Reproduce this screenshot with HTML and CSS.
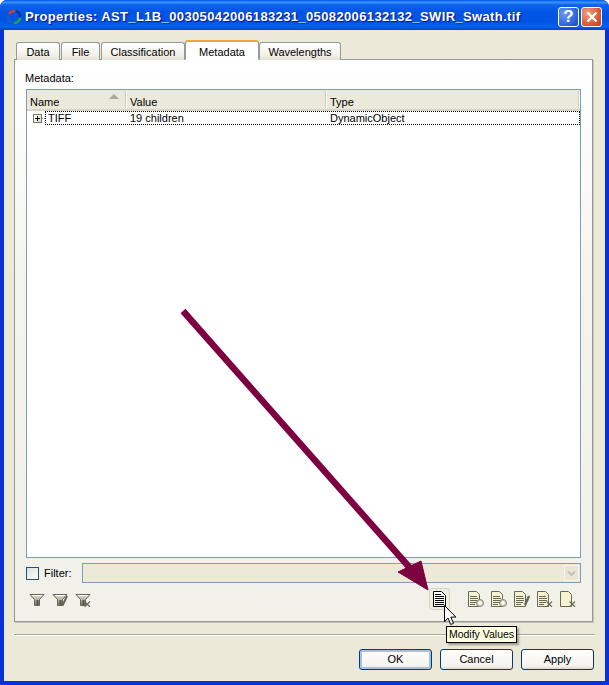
FILE: index.html
```html
<!DOCTYPE html>
<html lang="en">
<head>
<meta charset="utf-8">
<title>Properties</title>
<link rel="stylesheet" href="styles.css">
</head>
<body>
<svg class="defs" width="0" height="0" aria-hidden="true">
  <defs>
    <linearGradient id="funnelFill" x1="0" y1="0" x2="0" y2="1">
      <stop offset="0" stop-color="#e8e6d4"/><stop offset="1" stop-color="#77766a"/>
    </linearGradient>
    <symbol id="funnel" viewBox="0 0 16 16">
      <path d="M1 3.5h14L10.5 8.5v6h-5v-6z" fill="url(#funnelFill)" stroke="#66665a" stroke-width="1"/>
      <path d="M3 4.5h10" stroke="#fff" stroke-width="1"/>
      <path d="M8.5 9v5" stroke="#55554a" stroke-width="2"/>
    </symbol>
    <symbol id="doc" viewBox="0 0 16 16">
      <path d="M.5 .5h8l3 3v12h-11z" fill="#f6f3cf" stroke="#66665a"/>
      <path d="M2 5.500h7M2 7.500h8M2 9.500h8M2 11.500h7M2 13.500h5" stroke="#66665a"/>
    </symbol>
    <symbol id="plus" viewBox="0 0 16 16">
      <circle cx="12" cy="12" r="3.500" fill="#d0cfbe" stroke="#88887a"/>
      <path d="M10 12h4M12 10v4" stroke="#fff" stroke-width="1.400"/>
    </symbol>
    <symbol id="cross" viewBox="0 0 16 16">
      <path d="M9.500 10.500l5.500 5.500M15 10.500l-5.500 5.500" stroke="#66665a" stroke-width="1.100"/>
    </symbol>
  </defs>
</svg>
<div class="window">
  <header class="titlebar">
    <svg class="app-icon" viewBox="0 0 16 16" width="16" height="16">
      <path d="M3 5A6 6 0 0 1 9 2" fill="none" stroke="#d23a2a" stroke-width="2.600"/>
      <path d="M10 2A6 6 0 0 1 14 8" fill="none" stroke="#14349c" stroke-width="2.600"/>
      <path d="M14 9A6 6 0 0 1 8 14" fill="none" stroke="#20a848" stroke-width="2.600"/>
      <path d="M7 14A6 6 0 0 1 2 7" fill="none" stroke="#1c5cc8" stroke-width="2.600"/>
    </svg>
    <span class="title">Properties: AST_L1B_00305042006183231_05082006132132_SWIR_Swath.tif</span>
    <span class="cap-btn cap-help">?</span>
    <span class="cap-btn cap-close">
      <svg viewBox="0 0 12 12" width="12" height="12"><path d="M1.500 1.500l9 9M10.500 1.500l-9 9" stroke="#fff" stroke-width="2.400"/></svg>
    </span>
  </header>

  <div class="client">
    <nav class="tabs">
      <span class="tab tab-data">Data</span>
      <span class="tab tab-file">File</span>
      <span class="tab tab-class">Classification</span>
      <span class="tab tab-active">Metadata</span>
      <span class="tab tab-wave">Wavelengths</span>
    </nav>

    <section class="panel">
      <div class="label">Metadata:</div>
      <div class="tree">
        <div class="tree-head">
          <span class="col col-name">Name<i class="sort"></i></span>
          <span class="col col-value">Value</span>
          <span class="col col-type">Type</span>
        </div>
        <div class="tree-row">
          <span class="expander"></span>
          <span class="connector"></span>
          <div class="selected">
            <span>TIFF</span>
            <span>19 children</span>
            <span>DynamicObject</span>
          </div>
        </div>
      </div>

      <div class="filter-row">
        <span class="checkbox"></span>
        <span class="filter-label">Filter:</span>
        <div class="combo">
          <span class="combo-btn">
            <svg viewBox="0 0 9 7" width="9" height="7"><path d="M1 1.500l3.500 3.500L8 1.500" fill="none" stroke="#c4c2b2" stroke-width="2"/></svg>
          </span>
        </div>
      </div>

      <div class="toolbar">
        <div class="tool-group">
          <span class="tool"><svg width="16" height="16"><use href="#funnel"/></svg></span>
          <span class="tool"><svg width="16" height="16"><use href="#funnel"/><path d="M15 5l-4.500 9.500" stroke="#66665a" stroke-width="2"/></svg></span>
          <span class="tool"><svg width="16" height="16"><use href="#funnel"/><use href="#cross"/></svg></span>
        </div>
        <div class="tool-group tool-group-docs">
          <span class="tool-active">
            <svg viewBox="0 0 13 16" width="13" height="16">
              <path d="M.5.5h8l4 4v11H.5z" fill="#fff" stroke="#000"/>
              <path d="M2 3.500h6M2 5.500h9M2 7.500h9M2 9.500h9M2 11.500h9M2 13.500h9" stroke="#000"/>
            </svg>
          </span>
          <div class="docs">
            <span class="tool"><svg width="16" height="16"><use href="#doc"/><use href="#plus"/></svg></span>
            <span class="tool"><svg width="16" height="16"><use href="#doc"/><use href="#plus"/></svg></span>
            <span class="tool"><svg width="16" height="16"><use href="#doc"/><path d="M15 5l-4 9" stroke="#66665a" stroke-width="2.400"/></svg></span>
            <span class="tool"><svg width="16" height="16"><use href="#doc"/><use href="#cross"/></svg></span>
            <span class="tool"><svg width="16" height="16"><path d="M.5 .5h8l3 3v12h-11z" fill="#f6f3cf" stroke="#66665a"/><use href="#cross"/></svg></span>
          </div>
        </div>
      </div>
    </section>

    <div class="separator"></div>

    <footer class="buttons">
      <span class="btn btn-default">OK</span>
      <span class="btn">Cancel</span>
      <span class="btn">Apply</span>
    </footer>
  </div>

  <svg class="arrow" viewBox="0 0 609 685" width="609" height="685" aria-hidden="true">
    <path d="M183 311L410 568" stroke="#7d0040" stroke-width="6.500" fill="none"/>
    <path d="M398 572L421 561L428 590z" fill="#7d0040" stroke="#7d0040"/>
  </svg>

  <svg class="cursor" viewBox="0 0 13 21" width="13" height="21" aria-hidden="true">
    <path d="M.5.5v16l3.600-3.400 2.600 6.400 2.800-1.200-2.600-6.200h5z" fill="#fff" stroke="#000"/>
  </svg>

  <div class="tooltip">Modify Values</div>
</div>
</body>
</html>
```
FILE: styles.css
```css
* { box-sizing: border-box; }

html, body {
  margin: 0;
  padding: 0;
  background: #fff;
}

body {
  font: 11px/14px "Liberation Sans", Arial, sans-serif;
  color: #000;
  overflow: hidden;
}

.defs { position: absolute; }

.window {
  position: relative;
  width: 609px;
  height: 685px;
  display: flex;
  flex-direction: column;
  background: #0831d9;
  border-radius: 7px 7px 0 0;
  overflow: hidden;
}

.titlebar {
  flex: none;
  height: 30px;
  display: flex;
  align-items: center;
  padding: 0 7px 0 6px;
  background: linear-gradient(180deg, #0058ee 0%, #3a93ff 8%, #0f63ea 16%, #0055e5 40%, #0054e3 70%, #0a5ff0 88%, #0043cf 100%);
  color: #fff;
}

.app-icon { flex: none; margin-right: 3px; margin-top: 3px; }

.title {
  flex: 1;
  font: bold 13px/16px "Liberation Sans", Arial, sans-serif;
  letter-spacing: .37px;
  text-shadow: 1px 1px 1px #0f1089;
  white-space: nowrap;
  margin-top: 3px;
}

.cap-btn {
  flex: none;
  width: 21px;
  height: 20px;
  margin-left: 2px;
  margin-top: 3px;
  border: 1px solid #fff;
  border-radius: 3px;
  display: flex;
  align-items: center;
  justify-content: center;
  color: #fff;
}

.cap-help {
  background: radial-gradient(circle at 30% 30%, #6b9cf2, #2a5fdc 70%, #1d48bd);
  font: bold 17px/18px "Liberation Sans", Arial, sans-serif;
}

.cap-close {
  background: radial-gradient(circle at 30% 30%, #f0a088, #dc5a35 60%, #bd3a18);
}

.client {
  flex: 1;
  margin: 0 4px 4px;
  padding: 11px 12px 0 10px;
  background: #ece9d8;
  display: flex;
  flex-direction: column;
}

.tabs {
  flex: none;
  height: 19px;
  display: flex;
  align-items: flex-end;
  padding-left: 2px;
  position: relative;
  z-index: 1;
  margin-bottom: -1px;
}

.tab {
  height: 18px;
  padding-top: 2px;
  text-align: center;
  background: linear-gradient(180deg, #fff, #f3f1e8 70%, #e4e2d4);
  border: 1px solid #919b9c;
  border-bottom: none;
  border-radius: 3px 3px 0 0;
  margin-right: 1px;
}

.tab-data { width: 44px; }
.tab-file { width: 39px; }
.tab-class { width: 84px; margin-right: 0; }
.tab-wave { width: 82px; }

.tab-active {
  width: 74px;
  height: 20px;
  padding-top: 3px;
  background: #fff;
  border-top: 2px solid #f0a63c;
  border-bottom: 1px solid #fff;
  margin-right: 0;
}

.panel {
  flex: none;
  width: 579px;
  height: 563px;
  padding: 11px 11px 0 10px;
  border: 1px solid #919b9c;
  box-shadow: 1px 1px 0 #c8c5b4;
  background: linear-gradient(180deg, #fff 0, #f4f4ee 40%, #f1f1ea 100%);
  display: flex;
  flex-direction: column;
}

.label { height: 14px; margin-bottom: 4px; }

.tree {
  flex: none;
  height: 469px;
  margin-left: 1px;
  background: #fff;
  border: 1px solid #7f9db9;
}

.tree-head {
  height: 21px;
  display: grid;
  grid-template-columns: 99px 200px 1fr;
  background: #ebe9d9;
  border-bottom: 2px solid #d8d5c5;
  padding: 1px 0 0;
}

.col {
  position: relative;
  padding: 4px 0 0 3px;
  border-right: 1px solid #cfccbc;
  box-shadow: 1px 0 0 #fff;
  height: 17px;
}

.col-value { padding-left: 4px; }
.col-type { padding-left: 4px; margin-right: 1px; }

.sort {
  position: absolute;
  top: 3px;
  right: 6px;
  width: 0;
  height: 0;
  border-left: 5px solid transparent;
  border-right: 5px solid transparent;
  border-bottom: 5px solid #aca899;
}

.tree-row {
  height: 14px;
  display: flex;
  align-items: center;
  padding-left: 6px;
}

.expander {
  position: relative;
  flex: none;
  width: 9px;
  height: 9px;
  border: 1px solid #7b7b6c;
  background: linear-gradient(135deg, #fff, #d8d5c5);
}

.expander::before {
  content: "";
  position: absolute;
  left: 1px;
  top: 3px;
  width: 5px;
  height: 1px;
  background: #000;
}

.expander::after {
  content: "";
  position: absolute;
  left: 3px;
  top: 1px;
  width: 1px;
  height: 5px;
  background: #000;
}

.connector {
  flex: none;
  width: 3px;
  border-top: 1px dotted #999;
}

.selected {
  flex: 1;
  height: 14px;
  display: grid;
  grid-template-columns: 82px 200px 1fr;
  align-items: center;
  border: 1px dotted #000;
  padding-left: 2px;
  line-height: 12px;
}

.filter-row {
  flex: none;
  height: 20px;
  margin-top: 5px;
  margin-left: 1px;
  display: flex;
  align-items: center;
}

.checkbox {
  flex: none;
  width: 13px;
  height: 13px;
  border: 1px solid #1c5180;
  background: linear-gradient(135deg, #dcdcd7, #fff);
}

.filter-label { width: 43px; padding-left: 5px; flex: none; }

.combo {
  flex: 1;
  height: 20px;
  background: #ece9d8;
  border: 1px solid #7f9db9;
  display: flex;
  justify-content: flex-end;
  padding: 1px;
}

.combo-btn {
  width: 15px;
  background: #e8e6d8;
  border: 1px solid #f5f4ea;
  display: flex;
  align-items: center;
  justify-content: center;
}

.toolbar {
  flex: none;
  height: 22px;
  margin-top: 5px;
  margin-left: 1px;
  display: flex;
  justify-content: space-between;
  align-items: center;
}

.tool-group { display: flex; gap: 7px; padding-left: 3px; }
.tool-group-docs { gap: 18px; padding: 0 5px 0 0; align-items: center; }
.docs { display: flex; gap: 7px; }

.tool { display: block; width: 16px; height: 16px; }
.tool svg { display: block; overflow: visible; }

.tool-active {
  width: 21px;
  height: 22px;
  border: 1px solid #d5d2c2;
  border-radius: 3px;
  background: #efeee3;
  display: flex;
  align-items: center;
  justify-content: center;
}

.separator {
  flex: none;
  width: 581px;
  height: 2px;
  margin-top: 12px;
  background: #aca899;
  border-bottom: 1px solid #fff;
}

.buttons {
  flex: none;
  display: flex;
  justify-content: flex-end;
  gap: 8px;
  margin-top: 13px;
  margin-right: -1px;
}

.btn {
  width: 73px;
  height: 21px;
  line-height: 19px;
  text-align: center;
  border: 1px solid #003c74;
  border-radius: 3px;
  background: linear-gradient(180deg, #fff, #f4f3ec 85%, #dcd8c8);
}

.btn-default { box-shadow: inset 0 0 0 2px #a6c0e8; }

.arrow {
  position: absolute;
  left: 0;
  top: 0;
  pointer-events: none;
}

.cursor {
  position: absolute;
  left: 444px;
  top: 605px;
}

.tooltip {
  position: absolute;
  left: 446px;
  top: 626px;
  width: 71px;
  height: 17px;
  line-height: 15px;
  font-size: 10.500px;
  text-align: center;
  white-space: nowrap;
  background: #ffffe1;
  border: 1px solid #000;
  box-shadow: 2px 2px 2px rgba(0, 0, 0, .35);
}
```
